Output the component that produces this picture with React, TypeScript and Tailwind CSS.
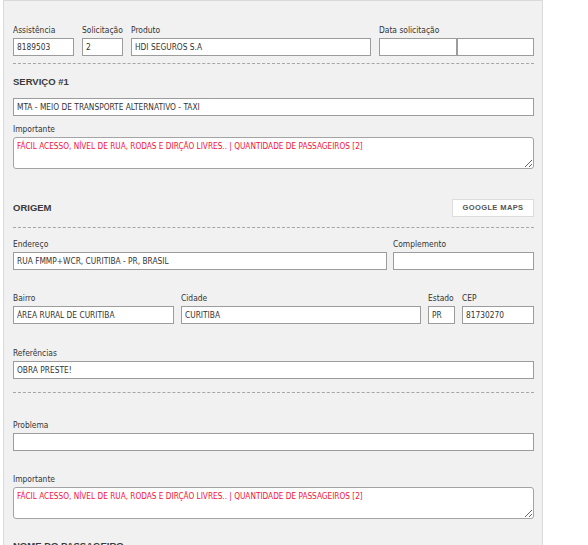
import React from "react";

const narrow = "font-['DejaVu_Sans_Condensed','Liberation_Sans_Narrow','Liberation_Sans',sans-serif]";

function Label({ children }: { children: React.ReactNode }) {
  return (
    <div className={`${narrow} text-[8.4px] leading-[12px] text-[#333] mb-[2px] whitespace-nowrap`}>
      {children}
    </div>
  );
}

function Field({ value = "", className = "" }: { value?: string; className?: string }) {
  return (
    <input
      readOnly
      defaultValue={value}
      className={`${narrow} block w-full h-[18px] bg-white border border-[#9c9c9c] px-[3px] text-[8.3px] text-[#333] outline-none ${className}`}
    />
  );
}

function Area({ value }: { value: string }) {
  return (
    <textarea
      readOnly
      defaultValue={value}
      className={`${narrow} block w-full h-[32px] bg-white border border-[#a4a4a4] rounded-[3px] px-[3px] pt-[2px] text-[8.2px] leading-[12px] text-[#f2143a] outline-none`}
    />
  );
}

function Heading({ children }: { children: React.ReactNode }) {
  return (
    <div className="font-['Liberation_Sans',sans-serif] font-bold text-[9.5px] leading-[12px] text-[#3a3a3a]">
      {children}
    </div>
  );
}

function Dashed({ className = "" }: { className?: string }) {
  return <div className={`border-t border-dashed border-[#a6a6a6] ${className}`} />;
}

const importante =
  "FÁCIL ACESSO, NÍVEL DE RUA, RODAS E DIRÇÃO LIVRES.. | QUANTIDADE DE PASSAGEIROS [2]";

export default function App() {
  return (
    <div className="min-h-[545px] bg-white pl-[3px] overflow-hidden">
      <div className="w-[540px] min-h-[560px] bg-[#f1f1f1] border border-[#dadada] pl-[9px] pr-[8px] pt-[23px]">
        {/* Row 1 */}
        <div className="flex gap-[8px]">
          <div className="w-[61px]">
            <Label>Assistência</Label>
            <Field value="8189503" />
          </div>
          <div className="w-[41px]">
            <Label>Solicitação</Label>
            <Field value="2" />
          </div>
          <div className="w-[240px]">
            <Label>Produto</Label>
            <Field value="HDI SEGUROS S.A" />
          </div>
          <div className="w-[155px]">
            <Label>Data solicitação</Label>
            <div className="flex">
              <Field className="w-[78px]" />
              <Field className="w-[77px]" />
            </div>
          </div>
        </div>

        <Dashed className="mt-[7px]" />

        <div className="mt-[12px]">
          <Heading>SERVIÇO #1</Heading>
        </div>
        <div className="mt-[10px]">
          <Field value="MTA - MEIO DE TRANSPORTE ALTERNATIVO - TAXI" />
        </div>

        <div className="mt-[7px]">
          <Label>Importante</Label>
          <div className="mt-[1px]">
            <Area value={importante} />
          </div>
        </div>

        <div className="mt-[30px] flex items-center justify-between h-[18px]">
          <Heading>ORIGEM</Heading>
          <button className="w-[82px] h-[18px] bg-white border border-[#dcdcdc] font-['Liberation_Sans',sans-serif] font-bold text-[7.5px] tracking-[0.4px] text-[#555]">
            GOOGLE MAPS
          </button>
        </div>

        <Dashed className="mt-[10px]" />

        <div className="mt-[10px] flex gap-[6px]">
          <div className="w-[374px]">
            <Label>Endereço</Label>
            <div className="mt-[1px]">
              <Field value="RUA FMMP+WCR, CURITIBA - PR, BRASIL" />
            </div>
          </div>
          <div className="w-[141px]">
            <Label>Complemento</Label>
            <div className="mt-[1px]">
              <Field />
            </div>
          </div>
        </div>

        <div className="mt-[22px] flex gap-[7px]">
          <div className="w-[161px]">
            <Label>Bairro</Label>
            <Field value="ÁREA RURAL DE CURITIBA" />
          </div>
          <div className="w-[240px]">
            <Label>Cidade</Label>
            <Field value="CURITIBA" />
          </div>
          <div className="w-[27px]">
            <Label>Estado</Label>
            <Field value="PR" />
          </div>
          <div className="w-[72px]">
            <Label>CEP</Label>
            <Field value="81730270" />
          </div>
        </div>

        <div className="mt-[23px]">
          <Label>Referências</Label>
          <div className="mt-[1px]">
            <Field value="OBRA PRESTE!" />
          </div>
        </div>

        <Dashed className="mt-[13px]" />

        <div className="mt-[26px]">
          <Label>Problema</Label>
          <div className="mt-[2px]">
            <Field />
          </div>
        </div>

        <div className="mt-[22px]">
          <Label>Importante</Label>
          <div className="mt-[1px]">
            <Area value={importante} />
          </div>
        </div>

        <div className="mt-[21px]">
          <Heading>NOME DO PASSAGEIRO</Heading>
        </div>
      </div>
    </div>
  );
}
